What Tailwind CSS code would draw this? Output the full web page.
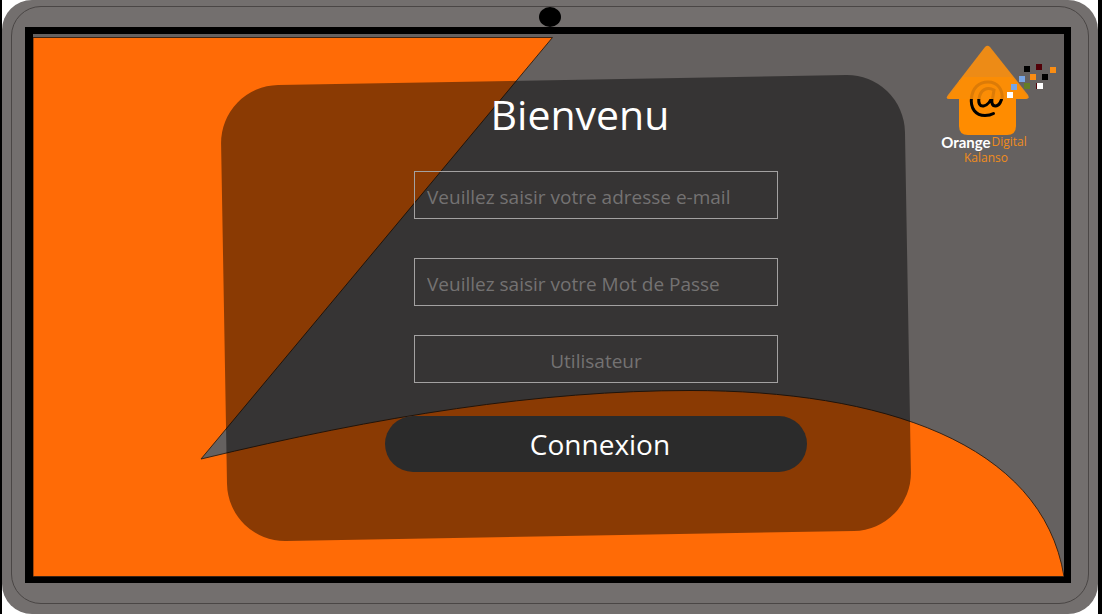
<!DOCTYPE html>
<html lang="fr">
<head>
<meta charset="utf-8">
<meta name="viewport" content="width=device-width, initial-scale=1">
<title>Orange Digital Kalanso</title>
<script src="https://cdn.jsdelivr.net/npm/@tailwindcss/browser@4"></script>
</head>
<body class="flex min-h-screen flex-col border-r-4 border-l-2 border-black bg-white font-['Open_Sans',sans-serif]">
  <!-- Tablet body -->
  <div class="flex flex-1 flex-col rounded-[30px] bg-[#736f6e] px-[9px] pt-[6px] pb-[10px]">
    <div class="flex flex-1 flex-col rounded-[30px] border border-[#4a4645] pr-[17px] pb-5 pl-[13px]">
      <div class="flex h-5 justify-center pl-[3px]"><span class="h-5 w-[22px] rounded-[50%] bg-black"></span></div>
      <!-- Screen -->
      <div class="relative isolate grid flex-1 grid-cols-[191px_1fr_156px] border-t-[7px] border-r-[7px] border-b-[6px] border-l-8 border-black bg-[#656160]">
        <svg class="absolute inset-0 -z-20 h-full w-full" viewBox="33 34 1031 543" preserveAspectRatio="none" aria-hidden="true">
          <path d="M33 37.500H552.500L201 459C380 416 540 390.500 690 390.500C880 390.500 1042 442 1064 576.500H33Z" fill="#ff6b06" stroke="#3a2414" stroke-width="1"/>
        </svg>
        <main class="relative col-start-2 mt-[46px] mb-[41px]">
          <div class="absolute inset-0 -z-10 -rotate-1 rounded-[58px] bg-black/46"></div>
          <form class="flex flex-col items-center pt-1 pl-[60px]">
            <h1 class="mr-8 text-[41px] leading-[60px] text-white">Bienvenu</h1>
            <input type="email" aria-label="Adresse e-mail" placeholder="Veuillez saisir votre adresse e-mail" class="mt-[27px] h-12 w-full max-w-[364px] border border-[#a3a1a1] px-3 pt-1 text-[19px] text-white placeholder:text-[#747272]">
            <input type="password" aria-label="Mot de passe" placeholder="Veuillez saisir votre Mot de Passe" class="mt-[39px] h-12 w-full max-w-[364px] border border-[#a3a1a1] px-3 pt-1 text-[19px] text-white placeholder:text-[#747272]">
            <input type="text" aria-label="Utilisateur" placeholder="Utilisateur" class="mt-[29px] h-12 w-full max-w-[364px] border border-[#a3a1a1] px-3 pt-1 text-center text-[19px] text-white placeholder:text-[#747272]">
            <button type="submit" class="mt-[33px] h-14 w-full max-w-[422px] rounded-full bg-[#2b2b2b] pl-2 text-[28px] text-white">Connexion</button>
          </form>
        </main>
        <div class="col-start-3 pt-3 pl-[38px]">
          <svg class="h-[88px] w-[110px] overflow-visible" viewBox="946 46 110 88" aria-hidden="true">
            <path d="M959 80H1016V126Q1016 135 1007 135H968Q959 135 959 126Z" fill="#ff8c00"/>
            <g fill="none" stroke="#000" stroke-width="3" stroke-linecap="round">
              <path d="M971.500 97C970 109 976 115.500 985 115.500Q990 115.500 993.500 113.500"/>
              <path d="M979 97C978 104 980 106.500 983.500 106C988 105 991 101 992.500 95C991 103 992 106 995.500 106C999 106 1002 101 1002 96"/>
            </g>
            <path d="M985 47Q987.500 44.500 990 47L1028 95Q1030 99 1026 99H949Q945 99 948 95Z" fill="#ed8b16"/>
            <path d="M963 77H1012L1027 96Q1028 99 1025 99H950Q947 99 949 96Z" fill="#fb8d05"/>
            <g fill="none" stroke="#dc7b07" stroke-width="3">
              <path d="M971.500 99C972 88 979 82 988 82C998 82 1003 90 1002 99M979 99C980 90 987 86 994 90L992.500 99"/>
            </g>
            <path d="M1024 66h6v6h-6zM1042 74h6v6h-6z" fill="#000"/>
            <path d="M1036 64h6v6h-6z" fill="#520008"/>
            <path d="M1050 67h6v6h-6zM1030 74h6v6h-6z" fill="#f98d14"/>
            <path d="M1019 76h6v6h-6zM1011 84h6v6h-6z" fill="#78a5e5"/>
            <path d="M1024 83h6v6h-6z" fill="#637d27"/>
            <path d="M1036 83h1v6h-1z" fill="#520008"/>
            <path d="M1037 83h6v6h-6zM1007 92h6v6h-6z" fill="#fff"/>
          </svg>
          <div class="-ml-2 w-[92px] text-center text-[12px] leading-4 whitespace-nowrap text-[#f08c1c]">
            <p class="flex items-center justify-center gap-px"><span class="font-['Lato',sans-serif] text-[15px] font-bold text-white">Orange</span><span class="font-medium">Digital</span></p>
            <p class="pl-1 font-medium">Kalanso</p>
          </div>
        </div>
      </div>
    </div>
  </div>
</body>
</html>
